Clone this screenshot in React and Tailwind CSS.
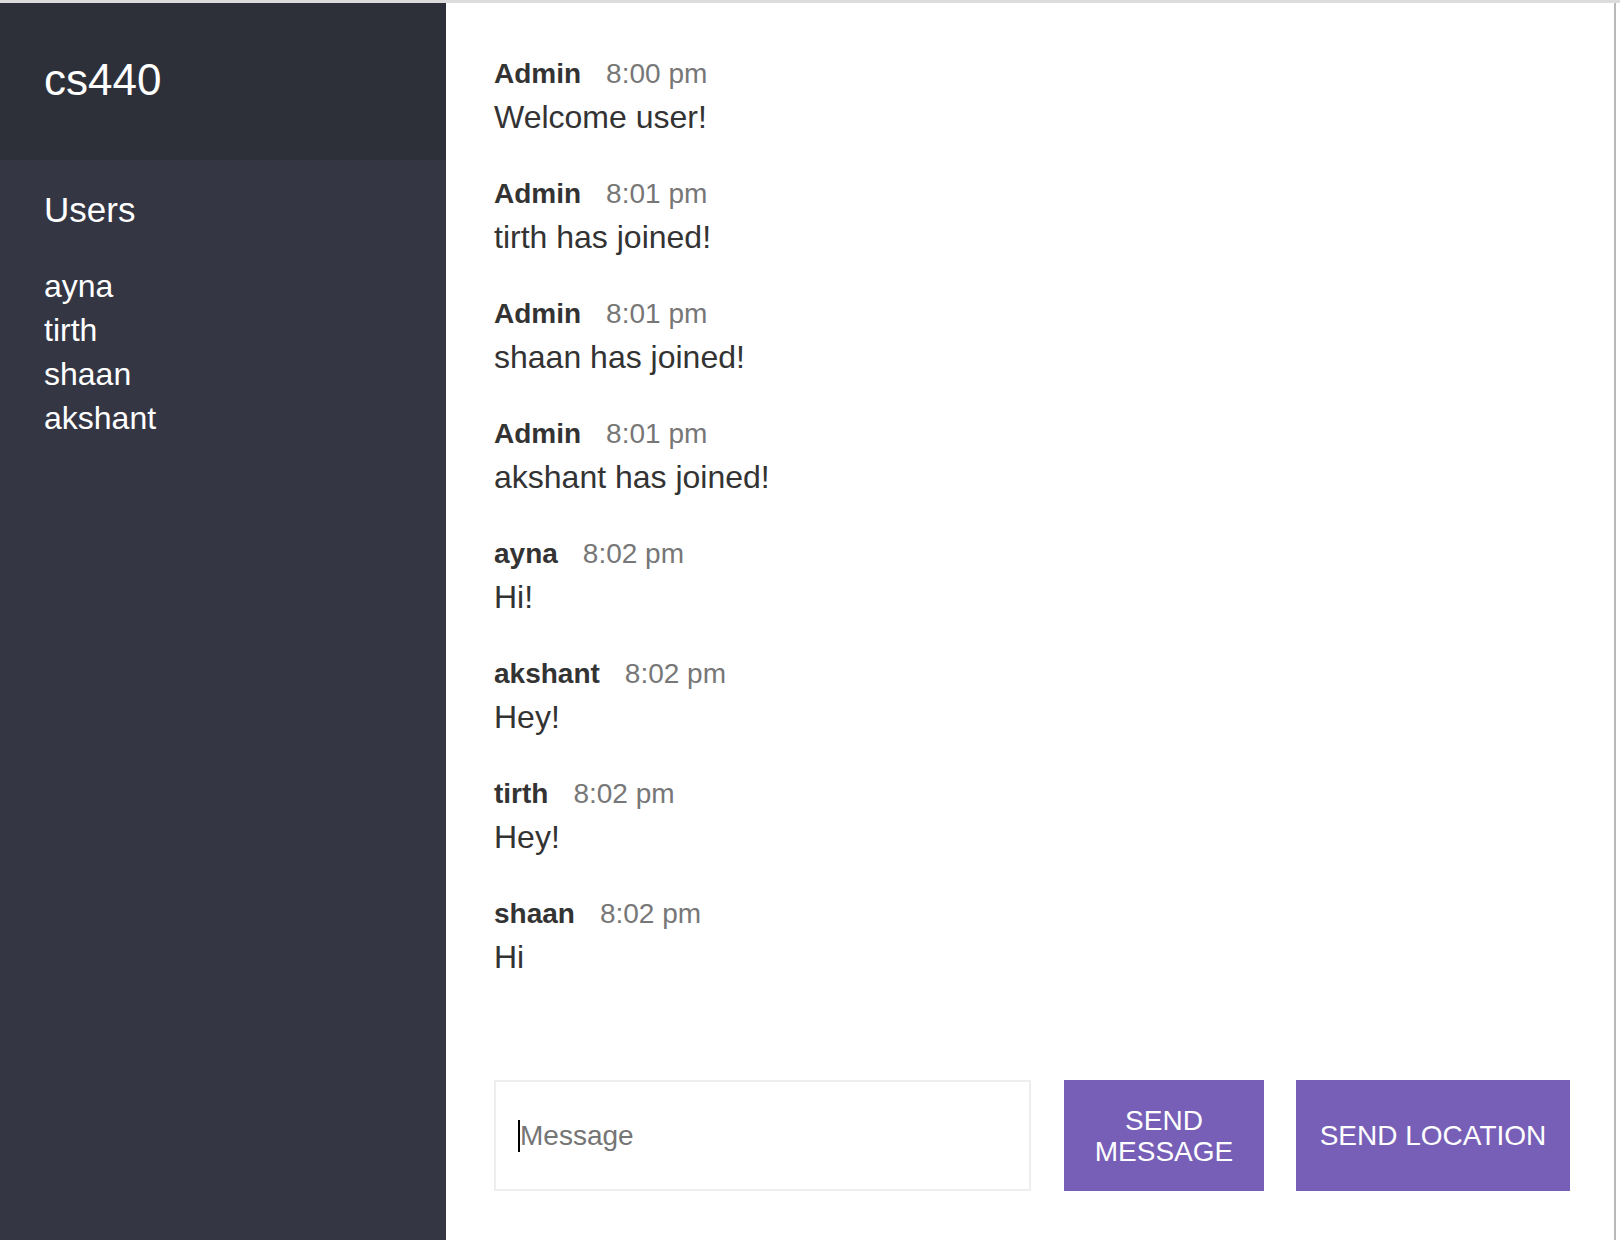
const users = ["ayna", "tirth", "shaan", "akshant"];

const messages = [
  { name: "Admin", time: "8:00 pm", text: "Welcome user!" },
  { name: "Admin", time: "8:01 pm", text: "tirth has joined!" },
  { name: "Admin", time: "8:01 pm", text: "shaan has joined!" },
  { name: "Admin", time: "8:01 pm", text: "akshant has joined!" },
  { name: "ayna", time: "8:02 pm", text: "Hi!" },
  { name: "akshant", time: "8:02 pm", text: "Hey!" },
  { name: "tirth", time: "8:02 pm", text: "Hey!" },
  { name: "shaan", time: "8:02 pm", text: "Hi" },
];

function Sidebar() {
  return (
    <aside className="w-[446px] shrink-0 flex flex-col bg-[#343644] text-white">
      <div className="h-[157px] flex items-center px-[44px] pb-[3px] bg-[#2e3039]">
        <h1 className="text-[44px] leading-[50px]">cs440</h1>
      </div>
      <div className="px-[44px] pt-[29px]">
        <h3 className="text-[35px] leading-[42px]">Users</h3>
        <ul className="mt-[33px] text-[32px] leading-[44px]">
          {users.map((u) => (
            <li key={u}>{u}</li>
          ))}
        </ul>
      </div>
    </aside>
  );
}

function Message({ name, time, text }) {
  return (
    <div className="mb-[42px]">
      <p className="text-[28px] leading-[30px]">
        <span className="font-bold text-[#333] mr-[25px]">{name}</span>
        <span className="text-[#777]">{time}</span>
      </p>
      <p className="mt-2 text-[32px] leading-[40px] text-[#333]">{text}</p>
    </div>
  );
}

function ChatPanel() {
  return (
    <main className="flex-1 flex flex-col bg-white border-r-2 border-[#b9b9b9]">
      <div className="flex-1 pl-[48px] pt-[56px]">
        {messages.map((m, i) => (
          <Message key={i} {...m} />
        ))}
      </div>
      <div className="flex pl-[48px] pr-[44px] pb-[49px]">
        <div className="relative w-[537px] h-[111px]">
          <input
            placeholder="Message"
            className="w-full h-full border-2 border-[#eeeeee] px-[24px] text-[28px] text-[#333] placeholder:text-[#757575] outline-none"
          />
          <span className="absolute left-[24px] top-[40px] w-[2px] h-[32px] bg-black"></span>
        </div>
        <button className="ml-[33px] w-[200px] h-[111px] bg-[#775fb8] text-white text-[28px] leading-[31px] uppercase">
          Send Message
        </button>
        <button className="ml-[32px] w-[274px] h-[111px] bg-[#775fb8] text-white text-[28px] uppercase">
          Send Location
        </button>
      </div>
    </main>
  );
}

export default function App() {
  return (
    <div className="w-[1620px] h-[1240px] flex flex-col bg-white font-['Liberation_Sans',Arial,sans-serif] overflow-hidden">
      <div className="h-[3px] bg-[#dcdcdc] shrink-0"></div>
      <div className="flex flex-1 min-h-0">
        <Sidebar />
        <ChatPanel />
        <div className="w-[4px] bg-white"></div>
      </div>
    </div>
  );
}
